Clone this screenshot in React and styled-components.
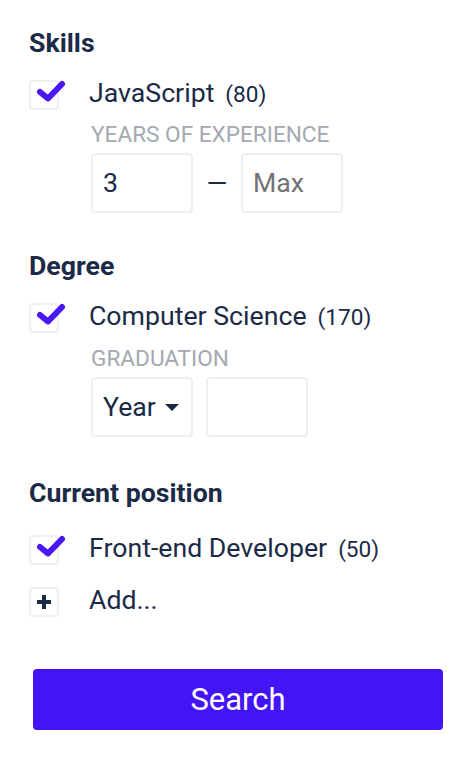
import React from "react";
import styled, { createGlobalStyle } from "styled-components";

const Global = createGlobalStyle`
  html, body { margin: 0; padding: 0; background: #fff; }
  body { font-family: Roboto, "Liberation Sans", sans-serif; color: #1b2a47; }
  * { box-sizing: border-box; }
`;

const Page = styled.div`
  width: 476px;
  padding: 28px 33px 0 29px;
  display: flex;
  flex-direction: column;
`;

const Section = styled.section`
  display: flex;
  flex-direction: column;
  margin-top: ${(p) => p.$mt || 0}px;
`;

const Heading = styled.h2`
  margin: 0;
  font-size: 26.7px;
  line-height: 30px;
  font-weight: 700;
  color: #1b2a47;
`;

const Options = styled.div`
  display: flex;
  flex-direction: column;
  gap: 22px;
  margin-top: ${(p) => p.$mt || 22}px;
`;

const Row = styled.div`
  display: flex;
  align-items: flex-start;
  gap: 30px;
`;

const Box = styled.div`
  position: relative;
  width: 30px;
  height: 30px;
  flex: none;
  border: 2px solid #eceff4;
  border-radius: 4px;
  display: flex;
  align-items: center;
  justify-content: center;
`;

const CheckSvg = styled.svg`
  position: absolute;
  left: -2px;
  top: -2px;
  overflow: visible;
`;

const Label = styled.div`
  display: flex;
  align-items: baseline;
  font-size: 26.7px;
  line-height: 26px;
  color: #1b2a47;
`;

const Count = styled.span`
  font-size: 22.6px;
  margin-left: 11px;
`;

const Sub = styled.div`
  display: flex;
  flex-direction: column;
  margin-left: 62px;
  margin-top: ${(p) => p.$mt || 12}px;
`;

const SubLabel = styled.div`
  font-size: 22.6px;
  line-height: 26px;
  color: #a4a9b1;
  text-transform: uppercase;
  margin-bottom: 5px;
`;

const Fields = styled.div`
  display: flex;
  align-items: center;
  gap: ${(p) => p.$gap || 0}px;
`;

const Input = styled.div`
  width: ${(p) => p.$w || 102}px;
  height: 60px;
  border: 2px solid #eceff4;
  border-radius: 4px;
  display: flex;
  align-items: center;
  justify-content: space-between;
  padding: 0 12px 0 10px;
  font-size: 26.7px;
  color: ${(p) => (p.$placeholder ? "#737373" : "#1b2a47")};
`;

const Dash = styled.span`
  width: 48px;
  text-align: center;
  font-size: 26.7px;
  color: #1b2a47;
`;

const Caret = styled.span`
  width: 0;
  height: 0;
  border-left: 7px solid transparent;
  border-right: 7px solid transparent;
  border-top: 7px solid #1b2a47;
  margin-top: 1px;
`;

const Button = styled.button`
  margin-top: 52px;
  margin-left: 4px;
  width: 410px;
  height: 61px;
  border: none;
  border-radius: 4px;
  background: #4314f5;
  color: #fff;
  font-family: Roboto, "Liberation Sans", sans-serif;
  font-size: 31px;
  cursor: pointer;
`;

const Check = () => (
  <CheckSvg width="40" height="30" viewBox="0 0 40 30">
    <path
      d="M11 12 L19 18.5 L33 4"
      fill="none"
      stroke="#4a17f5"
      strokeWidth="6"
      strokeLinecap="round"
      strokeLinejoin="round"
    />
  </CheckSvg>
);

const Plus = () => (
  <svg width="16" height="16" viewBox="0 0 16 16">
    <path d="M8 1 V15 M1 8 H15" stroke="#1b2a47" strokeWidth="4" strokeLinecap="butt" />
  </svg>
);

const Option = ({ label, count }) => (
  <Row>
    <Box>
      <Check />
    </Box>
    <Label>
      {label}
      <Count>({count})</Count>
    </Label>
  </Row>
);

export default function App() {
  return (
    <>
      <Global />
      <Page>
        <Section>
          <Heading>Skills</Heading>
          <Options>
            <Option label="JavaScript" count={80} />
          </Options>
          <Sub $mt={12}>
            <SubLabel>Years of experience</SubLabel>
            <Fields>
              <Input>3</Input>
              <Dash>—</Dash>
              <Input $placeholder>Max</Input>
            </Fields>
          </Sub>
        </Section>

        <Section $mt={38}>
          <Heading>Degree</Heading>
          <Options>
            <Option label="Computer Science" count={170} />
          </Options>
          <Sub $mt={13}>
            <SubLabel>Graduation</SubLabel>
            <Fields $gap={13}>
              <Input>
                Year <Caret />
              </Input>
              <Input />
            </Fields>
          </Sub>
        </Section>

        <Section $mt={41}>
          <Heading>Current position</Heading>
          <Options $mt={27}>
            <Option label="Front-end Developer" count={50} />
            <Row>
              <Box>
                <Plus />
              </Box>
              <Label>Add...</Label>
            </Row>
          </Options>
        </Section>

        <Button>Search</Button>
      </Page>
    </>
  );
}
